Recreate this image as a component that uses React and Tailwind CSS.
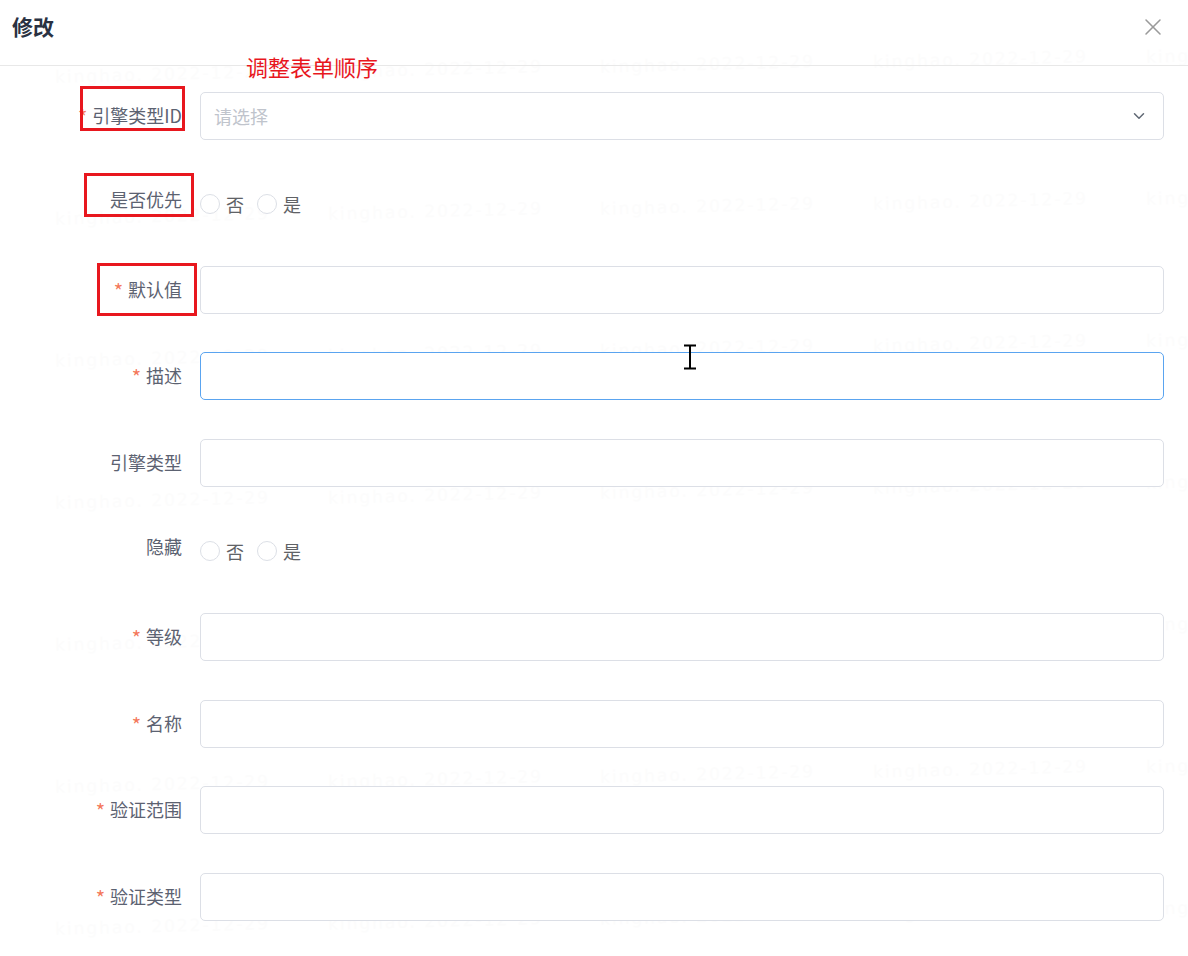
import React from "react";
import { X, ChevronDown } from "lucide-react";

const font = { fontFamily: '"Noto Sans CJK SC", "Noto Sans", sans-serif' };

const rows = [
  { label: "引擎类型ID", required: true, type: "select" },
  { label: "是否优先", type: "radio" },
  { label: "默认值", required: true, type: "input" },
  { label: "描述", required: true, type: "input", focused: true },
  { label: "引擎类型", type: "input" },
  { label: "隐藏", type: "radio" },
  { label: "等级", required: true, type: "input" },
  { label: "名称", required: true, type: "input" },
  { label: "验证范围", required: true, type: "input" },
  { label: "验证类型", required: true, type: "input" },
];

const Watermark = () => {
  const ys = [62, 204, 346, 488, 630, 772, 914];
  const xs = [55, 328, 600, 873, 1146];
  return (
    <div className="pointer-events-none absolute inset-0 overflow-hidden">
      {ys.map((y) =>
        xs.map((x, i) => (
          <span
            key={`${x}-${y}`}
            className="absolute whitespace-nowrap text-[17px] tracking-[2px] text-[#fcfcfc] -rotate-[1.5deg]"
            style={{ left: x, top: y - i * 5, fontFamily: '"DejaVu Sans", sans-serif' }}
          >
            kinghao. 2022-12-29
          </span>
        ))
      )}
    </div>
  );
};

const Radio = ({ text }) => (
  <label className="flex items-center">
    <span className="w-5 h-5 rounded-full border border-[#dcdfe6] bg-white" />
    <span className="ml-[6px] text-[18px] text-[#606266]">{text}</span>
  </label>
);

const Field = ({ row }) => {
  const isRadio = row.type === "radio";
  return (
    <div className="flex h-12">
      <div
        className={`w-[200px] shrink-0 flex items-center justify-end pr-[18px] text-[18px] text-[#5c6271] ${
          isRadio ? "pb-[7px]" : "pb-[1px]"
        }`}
      >
        {row.required && <span className="text-[#f4795b] mr-[5px] text-[20px] mt-[3px]">*</span>}
        {row.label}
      </div>
      {row.type === "select" && (
        <div className="flex-1 flex items-center justify-between rounded-[5px] border border-[#dcdfe6] bg-white pl-[13px] pr-[15px]">
          <span className="text-[18px] text-[#c0c4cc]">请选择</span>
          <ChevronDown size={18} strokeWidth={2} className="text-[#606874]" />
        </div>
      )}
      {row.type === "input" && (
        <div
          className={`flex-1 rounded-[5px] border bg-white ${
            row.focused ? "border-[#5aa4f0]" : "border-[#dcdfe6]"
          }`}
        />
      )}
      {isRadio && (
        <div className="flex items-center gap-[13px] pt-[3px]">
          <Radio text="否" />
          <Radio text="是" />
        </div>
      )}
    </div>
  );
};

export default function App() {
  return (
    <div className="relative w-[1188px] h-[956px] bg-white overflow-hidden" style={font}>
      <Watermark />

      <div className="relative flex items-center justify-between h-[66px] border-b border-[#e8e8e8] pl-3 pr-[21px] pb-[12px]">
        <h1 className="text-[21px] font-bold text-[#2a3242]">修改</h1>
        <X size={28} strokeWidth={1.3} className="text-[#9a9a9a]" />
      </div>

      <span className="absolute left-[246px] top-[51px] text-[22px] leading-[30px] text-[#e8171e]">调整表单顺序</span>

      <div className="relative flex flex-col gap-[38.8px] pt-[26px] pr-6">
        {rows.map((row) => (
          <Field key={row.label} row={row} />
        ))}
      </div>

      {/* annotation boxes */}
      <div className="absolute left-[80px] top-[86px] w-[105px] h-[45px] border-[3px] border-[#e8171e]" />
      <div className="absolute left-[84px] top-[173px] w-[110px] h-[44px] border-[3px] border-[#e8171e]" />
      <div className="absolute left-[97px] top-[263px] w-[100px] h-[53px] border-[3px] border-[#e8171e]" />

      {/* text cursor */}
      <svg className="absolute left-[683px] top-[344px]" width="14" height="26" viewBox="0 0 14 26">
        <path d="M1 1.5h12M1 24.5h12M7 1.5v23" stroke="#000" strokeWidth="2" fill="none" />
      </svg>
    </div>
  );
}
